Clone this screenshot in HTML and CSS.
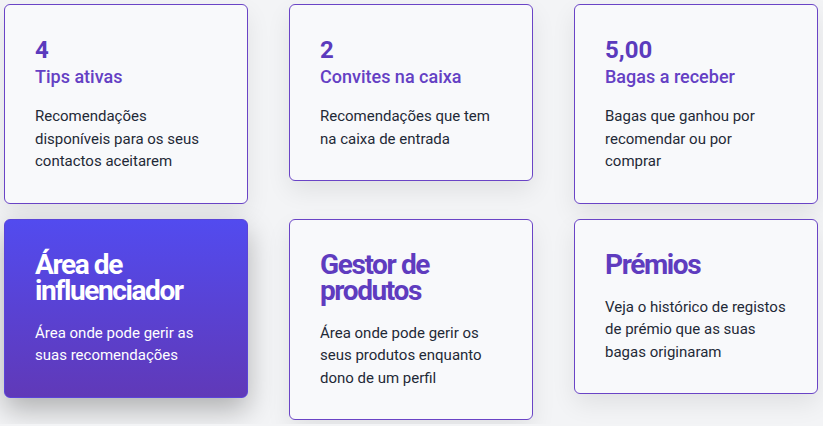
FILE: index.html
```html
<!DOCTYPE html>
<html lang="pt">
<head>
  <meta charset="UTF-8">
  <meta name="viewport" content="width=device-width, initial-scale=1.0">
  <title>Painel</title>
  <link rel="stylesheet" href="styles.css">
</head>
<body>
  <div class="cards">
    <div class="card">
      <div class="card-number">4</div>
      <h3 class="card-label">Tips ativas</h3>
      <p class="card-text">Recomendações disponíveis para os seus contactos aceitarem</p>
    </div>
    <div class="card">
      <div class="card-number">2</div>
      <h3 class="card-label">Convites na caixa</h3>
      <p class="card-text">Recomendações que tem na caixa de entrada</p>
    </div>
    <div class="card">
      <div class="card-number">5,00</div>
      <h3 class="card-label">Bagas a receber</h3>
      <p class="card-text">Bagas que ganhou por recomendar ou por comprar</p>
    </div>

    <a class="card card-link card-primary" href="#">
      <h2 class="card-title">Área de influenciador</h2>
      <p class="card-text">Área onde pode gerir as suas recomendações</p>
    </a>
    <a class="card card-link" href="#">
      <h2 class="card-title">Gestor de produtos</h2>
      <p class="card-text">Área onde pode gerir os seus produtos enquanto dono de um perfil</p>
    </a>
    <a class="card card-link" href="#">
      <h2 class="card-title">Prémios</h2>
      <p class="card-text">Veja o histórico de registos de prémio que as suas bagas originaram</p>
    </a>
  </div>
</body>
</html>
```

FILE: styles.css
```css
body {
  font-family: Roboto, "Noto Sans", sans-serif;
  margin: 0;
  padding: 4px 5px 4px 4px;
  background-color: #f3f4f6;
  color: #1f2937;
}

.cards {
  display: grid;
  grid-template-columns: repeat(3, 1fr);
  column-gap: 41px;
  row-gap: 15px;
  align-items: start;
}

.card {
  display: block;
  padding: 30px 27px 30px 30px;
  background-color: #f8f9fb;
  border: 1px solid #6a44c6;
  border-radius: 6px;
  box-shadow: 0 10px 25px rgba(0, 0, 0, 0.08);
  text-decoration: none;
  color: #1f2937;
}

.card-number {
  font-size: 24px;
  font-weight: 700;
  line-height: 30px;
  color: #5b3bbd;
}

.card-label {
  margin: 1px 0 0;
  font-size: 18px;
  font-weight: 500;
  line-height: 22px;
  color: #6440c4;
}

.card-text {
  margin: 17px 0 0;
  font-size: 15px;
  line-height: 1.5;
}

.card-title {
  margin: 0;
  font-size: 28px;
  font-weight: 700;
  line-height: 26px;
  letter-spacing: -1.4px;
  color: #5f3cbf;
}

.card-link .card-title {
  margin-top: 2px;
}

.card-link .card-text {
  margin-top: 18px;
}

.card-primary {
  background: linear-gradient(180deg, #524bef 0%, #6039b8 100%);
  border-color: #5a44d8;
  box-shadow: 0 12px 28px rgba(0, 0, 0, 0.28);
  color: #fff;
}

.card-primary .card-title {
  color: #fff;
}
```
